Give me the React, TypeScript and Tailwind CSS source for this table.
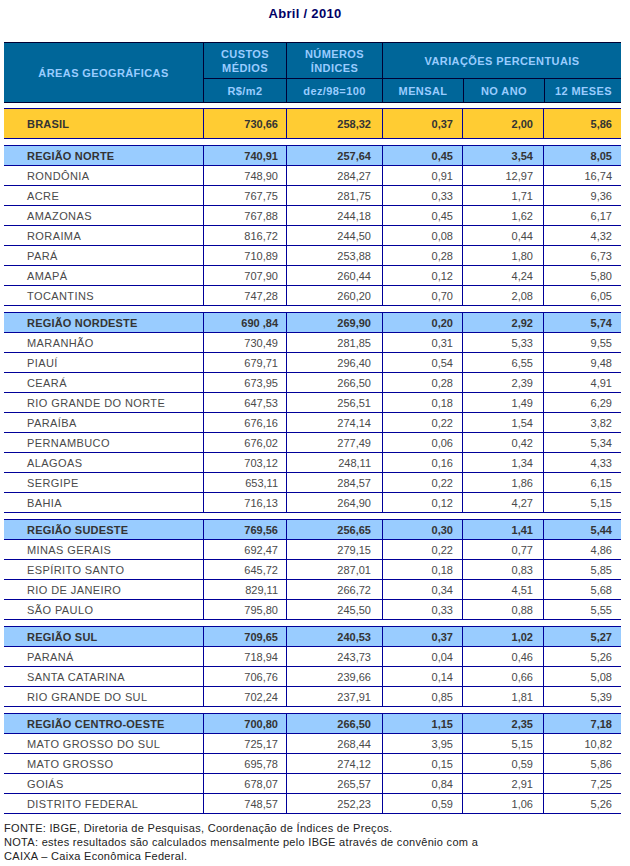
import React from "react";

type Row = [string, string, string, string, string, string];

const groups: { region: Row; rows: Row[] }[] = [
  {
    region: ["REGIÃO NORTE", "740,91", "257,64", "0,45", "3,54", "8,05"],
    rows: [
      ["RONDÔNIA", "748,90", "284,27", "0,91", "12,97", "16,74"],
      ["ACRE", "767,75", "281,75", "0,33", "1,71", "9,36"],
      ["AMAZONAS", "767,88", "244,18", "0,45", "1,62", "6,17"],
      ["RORAIMA", "816,72", "244,50", "0,08", "0,44", "4,32"],
      ["PARÁ", "710,89", "253,88", "0,28", "1,80", "6,73"],
      ["AMAPÁ", "707,90", "260,44", "0,12", "4,24", "5,80"],
      ["TOCANTINS", "747,28", "260,20", "0,70", "2,08", "6,05"],
    ],
  },
  {
    region: ["REGIÃO NORDESTE", "690 ,84", "269,90", "0,20", "2,92", "5,74"],
    rows: [
      ["MARANHÃO", "730,49", "281,85", "0,31", "5,33", "9,55"],
      ["PIAUÍ", "679,71", "296,40", "0,54", "6,55", "9,48"],
      ["CEARÁ", "673,95", "266,50", "0,28", "2,39", "4,91"],
      ["RIO GRANDE DO NORTE", "647,53", "256,51", "0,18", "1,49", "6,29"],
      ["PARAÍBA", "676,16", "274,14", "0,22", "1,54", "3,82"],
      ["PERNAMBUCO", "676,02", "277,49", "0,06", "0,42", "5,34"],
      ["ALAGOAS", "703,12", "248,11", "0,16", "1,34", "4,33"],
      ["SERGIPE", "653,11", "284,57", "0,22", "1,86", "6,15"],
      ["BAHIA", "716,13", "264,90", "0,12", "4,27", "5,15"],
    ],
  },
  {
    region: ["REGIÃO SUDESTE", "769,56", "256,65", "0,30", "1,41", "5,44"],
    rows: [
      ["MINAS GERAIS", "692,47", "279,15", "0,22", "0,77", "4,86"],
      ["ESPÍRITO SANTO", "645,72", "287,01", "0,18", "0,83", "5,85"],
      ["RIO DE JANEIRO", "829,11", "266,72", "0,34", "4,51", "5,68"],
      ["SÃO PAULO", "795,80", "245,50", "0,33", "0,88", "5,55"],
    ],
  },
  {
    region: ["REGIÃO SUL", "709,65", "240,53", "0,37", "1,02", "5,27"],
    rows: [
      ["PARANÁ", "718,94", "243,73", "0,04", "0,46", "5,26"],
      ["SANTA CATARINA", "706,76", "239,66", "0,14", "0,66", "5,08"],
      ["RIO GRANDE DO SUL", "702,24", "237,91", "0,85", "1,81", "5,39"],
    ],
  },
  {
    region: ["REGIÃO CENTRO-OESTE", "700,80", "266,50", "1,15", "2,35", "7,18"],
    rows: [
      ["MATO GROSSO DO SUL", "725,17", "268,44", "3,95", "5,15", "10,82"],
      ["MATO GROSSO", "695,78", "274,12", "0,15", "0,59", "5,86"],
      ["GOIÁS", "678,07", "265,57", "0,84", "2,91", "7,25"],
      ["DISTRITO FEDERAL", "748,57", "252,23", "0,59", "1,06", "5,26"],
    ],
  },
];

const GRID = "grid grid-cols-[199px_83px_96px_80px_81px_78px]";
const numPad = ["", "pr-[8px]", "pr-[11px]", "pr-[9px]", "pr-[10px]", "pr-[9px]"];

function DataRow({
  row,
  kind,
}: {
  row: Row;
  kind: "brasil" | "region" | "state";
}) {
  const bg =
    kind === "brasil" ? "bg-[#ffcc33]" : kind === "region" ? "bg-[#99ccff]" : "bg-white";
  const h = kind === "brasil" ? "h-[30px]" : "h-[20px]";
  const txt =
    kind === "state" ? "text-[#4a4a4a] font-normal" : "text-[#333333] font-bold";
  const track = kind === "state" ? "tracking-[0.4px]" : "tracking-[0.2px]";
  return (
    <div className={`${GRID} ${bg} ${h} ${txt} border-b border-[#000099]`}>
      {row.map((c, i) =>
        i === 0 ? (
          <div key={i} className={`flex items-center pl-[23px] whitespace-nowrap ${track}`}>
            {c}
          </div>
        ) : (
          <div
            key={i}
            className={`flex items-center justify-end border-l border-[#000099] whitespace-nowrap ${numPad[i]}`}
          >
            {c}
          </div>
        )
      )}
    </div>
  );
}

export default function App() {
  return (
    <div
      className="w-[630px] h-[866px] bg-white text-[11px] leading-[14px]"
      style={{ fontFamily: '"Liberation Sans", Arial, sans-serif' }}
    >
      <div className="h-[42px] pt-[6px] pr-[15px] pl-[4px] w-[621px] text-center text-[13px] leading-[16px] font-bold text-[#000066] tracking-[0.3px]">
        Abril / 2010
      </div>
      <div className="ml-[4px] w-[617px]">
        {/* header */}
        <div className="bg-[#006699] text-[#99ccff] font-bold tracking-[0.4px] border-t border-b border-[#000033] grid grid-cols-[199px_83px_96px_239px] h-[61px]">
          <div className="flex items-center justify-center">ÁREAS GEOGRÁFICAS</div>
          <div className="flex flex-col border-l border-[#000033]">
            <div className="h-[36px] flex items-center justify-center text-center border-b border-[#000033]">
              CUSTOS
              <br />
              MÉDIOS
            </div>
            <div className="flex-1 flex items-center justify-center">R$/m2</div>
          </div>
          <div className="flex flex-col border-l border-[#000033]">
            <div className="h-[36px] flex items-center justify-center text-center border-b border-[#000033]">
              NÚMEROS
              <br />
              ÍNDICES
            </div>
            <div className="flex-1 flex items-center justify-center">dez/98=100</div>
          </div>
          <div className="flex flex-col border-l border-[#000033]">
            <div className="h-[36px] flex items-center justify-center border-b border-[#000033]">
              VARIAÇÕES PERCENTUAIS
            </div>
            <div className="flex-1 grid grid-cols-[80px_81px_78px]">
              <div className="flex items-center justify-center">MENSAL</div>
              <div className="flex items-center justify-center border-l border-[#000033]">
                NO ANO
              </div>
              <div className="flex items-center justify-center border-l border-[#000033]">
                12 MESES
              </div>
            </div>
          </div>
        </div>

        {/* Brasil */}
        <div className="mt-[5px] border-t border-[#000099]">
          <DataRow row={["BRASIL", "730,66", "258,32", "0,37", "2,00", "5,86"]} kind="brasil" />
        </div>

        {groups.map((g, gi) => (
          <div key={gi} className="mt-[6px] border-t border-[#000099]">
            <DataRow row={g.region} kind="region" />
            {g.rows.map((r, ri) => (
              <DataRow key={ri} row={r} kind="state" />
            ))}
          </div>
        ))}
      </div>
      <div className="mt-[7px] pl-[4px] text-[#222222] tracking-[0.3px]">
        <div>FONTE: IBGE, Diretoria de Pesquisas, Coordenação de Índices de Preços.</div>
        <div>NOTA: estes resultados são calculados mensalmente pelo IBGE através de convênio com a</div>
        <div>CAIXA – Caixa Econômica Federal.</div>
      </div>
    </div>
  );
}
